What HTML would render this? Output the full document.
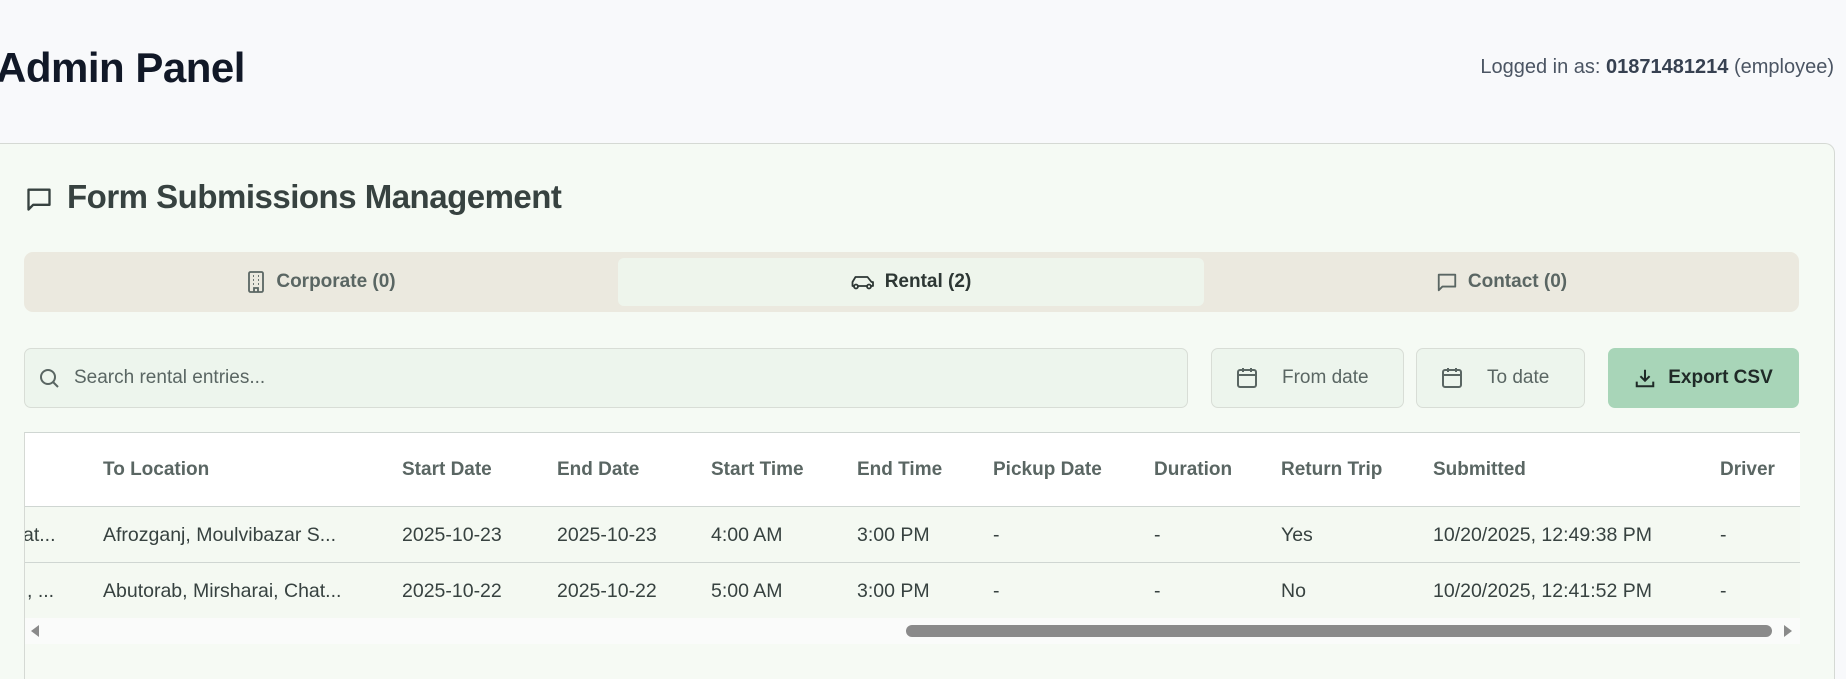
<!DOCTYPE html>
<html><head><meta charset="utf-8"><style>
*{box-sizing:border-box;margin:0;padding:0}
html,body{width:1846px;height:679px;overflow:hidden}
body{background:#f8f9fb;font-family:"Liberation Sans",sans-serif;position:relative;color:#374240}
.abs{position:absolute}
h1{position:absolute;left:-4px;top:44px;font-size:42px;font-weight:bold;color:#111827;letter-spacing:-0.5px}
.login{position:absolute;right:12px;top:56px;font-size:20px;color:#4b5563}
.login b{color:#374151}
.card{position:absolute;left:-10px;top:143px;width:1845px;height:536px;background:#f5faf4;border:1px solid #d5d9d4;border-bottom:none;border-radius:10px 10px 0 0}
.title{position:absolute;left:67px;top:178px;font-size:33px;font-weight:bold;color:#374240;letter-spacing:-0.5px}
.tabs{position:absolute;left:24px;top:252px;width:1775px;height:60px;background:#ebe9df;border-radius:9px}
.tab{position:absolute;top:0;height:60px;display:flex;align-items:center;justify-content:center;gap:10px;font-size:19px;color:#5a6663;font-weight:bold}
.tab.act{top:6px;height:48px;background:#eef5ec;border-radius:6px;color:#2d3734}
.box{position:absolute;top:348px;height:60px;background:#edf5ed;border:1px solid #d8ddd6;border-radius:7px;display:flex;align-items:center;font-size:19px;color:#5a6663}
.export{position:absolute;left:1608px;top:348px;width:191px;height:60px;background:#a8d5b8;border-radius:7px;display:flex;align-items:center;justify-content:center;gap:12px;font-size:19px;font-weight:bold;color:#1f2a27}
.table{position:absolute;left:24px;top:432px;width:1776px;height:247px;border-left:1px solid #d5d9d4;border-top:1px solid #cfd6d2;background:#f6faf4;overflow:hidden}
.hdr{position:absolute;left:0;top:0;width:1775px;height:74px;background:#fff;border-bottom:1px solid #cfd6d2}
.row{position:absolute;left:0;width:1775px;height:56px;border-bottom:1px solid #cfd6d2;background:#f4f9f2}
.c{position:absolute;font-size:19px;white-space:nowrap}
.hdr .c{top:26px;color:#5a6663;font-weight:bold}
.row .c{top:17px;color:#374240;font-size:19.5px}
.sb{position:absolute;left:0;top:185px;width:1775px;height:26px;background:#fafbfa}
</style></head><body>
<h1>Admin Panel</h1>
<div class="login">Logged in as: <b>01871481214</b> (employee)</div>
<div class="card"></div>
<svg class="abs" style="left:25px;top:185px" width="28" height="28" viewBox="0 0 24 24" fill="none" stroke="#374240" stroke-width="2" stroke-linejoin="round"><path d="M3 4h18v13H7l-4 4z"/></svg>
<div class="title">Form Submissions Management</div>
<div class="tabs">
 <div class="tab" style="left:0;width:594px"><svg width="20" height="22" viewBox="0 0 20 22" fill="none" stroke="#5a6663" stroke-width="1.8"><rect x="3" y="1" width="14" height="20" rx="1.5"/><path d="M7 5h1M12 5h1M7 9h1M12 9h1M7 13h1M12 13h1M8 21v-4h4v4"/></svg>Corporate (0)</div>
 <div class="tab act" style="left:594px;width:586px"><svg width="24" height="18" viewBox="0 0 24 18" fill="none" stroke="#2d3734" stroke-width="1.8" stroke-linejoin="round"><path d="M3 13H1.5V9l3-5h12l4 5h1.5v4H20M6 13h10"/><circle cx="5" cy="13.5" r="2"/><circle cx="18" cy="13.5" r="2"/></svg>Rental (2)</div>
 <div class="tab" style="left:1180px;width:595px"><svg width="22" height="22" viewBox="0 0 24 24" fill="none" stroke="#5a6663" stroke-width="2" stroke-linejoin="round"><path d="M3 4h18v13H7l-4 4z"/></svg>Contact (0)</div>
</div>
<div class="box" style="left:24px;width:1164px"><svg style="margin-left:12px" width="24" height="24" viewBox="0 0 24 24" fill="none" stroke="#5a6663" stroke-width="2"><circle cx="11" cy="11" r="7"/><path d="M16 16l5 5"/></svg><span style="margin-left:13px">Search rental entries...</span></div>
<div class="box" style="left:1211px;width:193px"><svg style="margin-left:24px" width="22" height="24" viewBox="0 0 22 24" fill="none" stroke="#5a6663" stroke-width="2"><rect x="2" y="4" width="18" height="17" rx="2"/><path d="M2 9h18M7 2v4M15 2v4"/></svg><span style="margin-left:24px">From date</span></div>
<div class="box" style="left:1416px;width:169px"><svg style="margin-left:24px" width="22" height="24" viewBox="0 0 22 24" fill="none" stroke="#5a6663" stroke-width="2"><rect x="2" y="4" width="18" height="17" rx="2"/><path d="M2 9h18M7 2v4M15 2v4"/></svg><span style="margin-left:24px">To date</span></div>
<div class="export"><svg width="22" height="22" viewBox="0 0 24 24" fill="none" stroke="#1f2a27" stroke-width="2.2"><path d="M12 3v12M7 10l5 5 5-5M3 16v5h18v-5"/></svg>Export CSV</div>
<div class="table">
 <div class="hdr">
  <div class="c" style="left:78px">To Location</div><div class="c" style="left:377px">Start Date</div><div class="c" style="left:532px">End Date</div><div class="c" style="left:686px">Start Time</div><div class="c" style="left:832px">End Time</div><div class="c" style="left:968px">Pickup Date</div><div class="c" style="left:1129px">Duration</div><div class="c" style="left:1256px">Return Trip</div><div class="c" style="left:1408px">Submitted</div><div class="c" style="left:1695px">Driver</div>
 </div>
 <div class="row" style="top:74px">
  <div class="c" style="left:-2px">at...</div><div class="c" style="left:78px">Afrozganj, Moulvibazar S...</div><div class="c" style="left:377px">2025-10-23</div><div class="c" style="left:532px">2025-10-23</div><div class="c" style="left:686px">4:00 AM</div><div class="c" style="left:832px">3:00 PM</div><div class="c" style="left:968px">-</div><div class="c" style="left:1129px">-</div><div class="c" style="left:1256px">Yes</div><div class="c" style="left:1408px">10/20/2025, 12:49:38 PM</div><div class="c" style="left:1695px">-</div>
 </div>
 <div class="row" style="top:130px">
  <div class="c" style="left:2px">, ...</div><div class="c" style="left:78px">Abutorab, Mirsharai, Chat...</div><div class="c" style="left:377px">2025-10-22</div><div class="c" style="left:532px">2025-10-22</div><div class="c" style="left:686px">5:00 AM</div><div class="c" style="left:832px">3:00 PM</div><div class="c" style="left:968px">-</div><div class="c" style="left:1129px">-</div><div class="c" style="left:1256px">No</div><div class="c" style="left:1408px">10/20/2025, 12:41:52 PM</div><div class="c" style="left:1695px">-</div>
 </div>
 <div class="sb">
  <div class="abs" style="left:6px;top:7px;width:0;height:0;border-top:6px solid transparent;border-bottom:6px solid transparent;border-right:8px solid #8a8a8a"></div>
  <div class="abs" style="left:881px;top:7px;width:866px;height:12px;border-radius:6px;background:#8a8a8a"></div>
  <div class="abs" style="left:1759px;top:7px;width:0;height:0;border-top:6px solid transparent;border-bottom:6px solid transparent;border-left:8px solid #8a8a8a"></div>
 </div>
</div>
</body></html>
